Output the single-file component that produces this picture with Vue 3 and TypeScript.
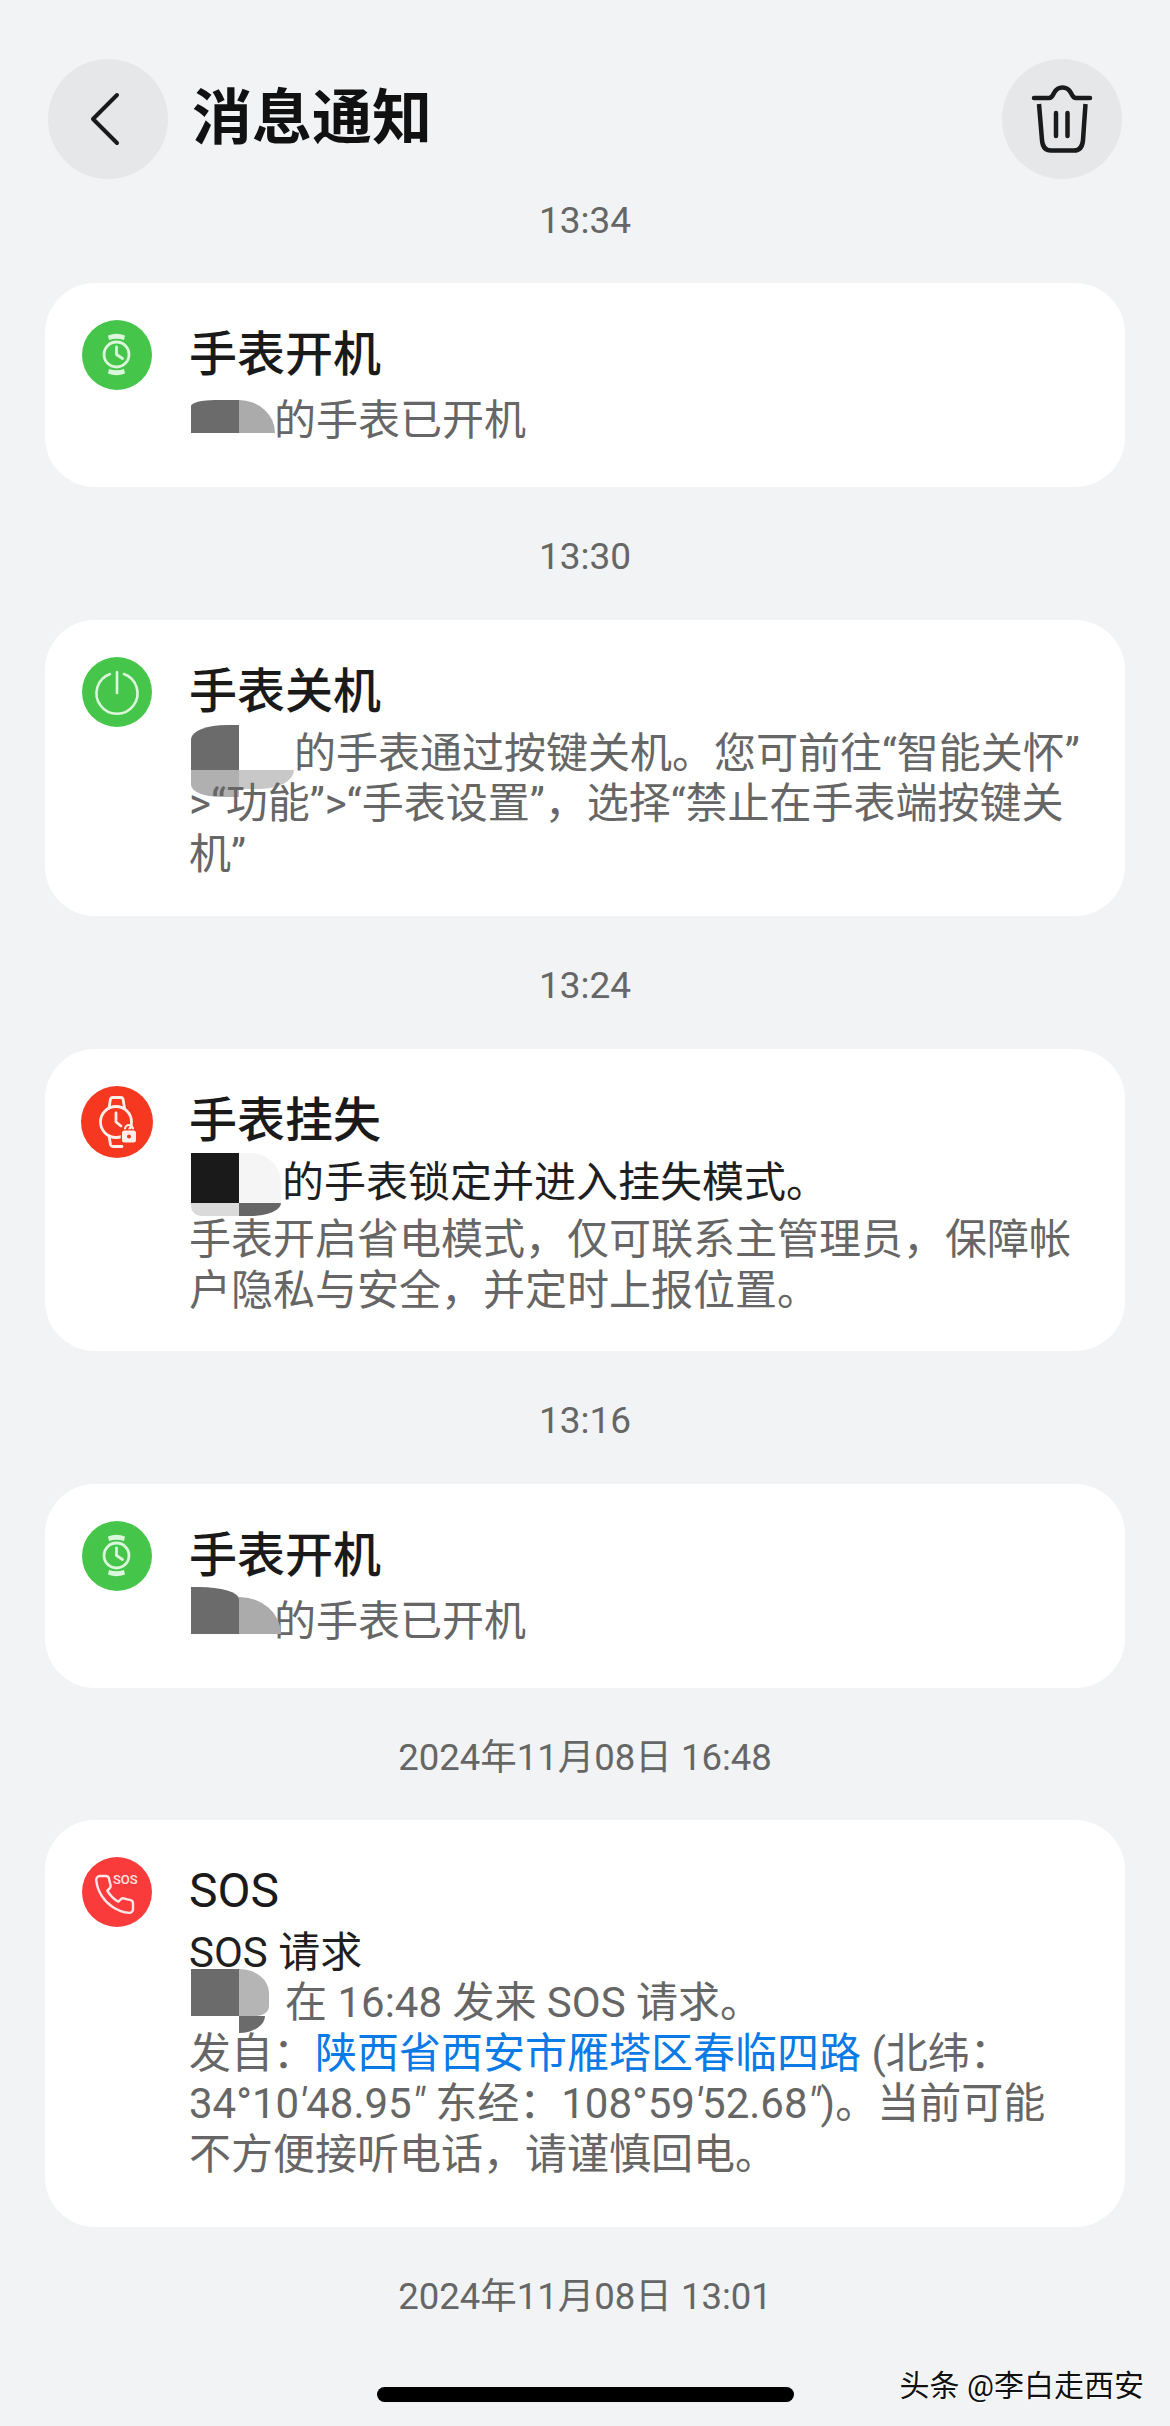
<script setup lang="ts">
</script>

<template>
  <div class="page">
    <header class="bar">
      <button class="round" aria-label="返回">
        <svg width="120" height="120" viewBox="0 0 120 120"><path d="M69 36 L45 60 L69 84" fill="none" stroke="#1a1a1a" stroke-width="4" stroke-linecap="round" stroke-linejoin="round"/></svg>
      </button>
      <h1>消息通知</h1>
      <button class="round" aria-label="删除">
        <svg width="120" height="120" viewBox="0 0 120 120" fill="none" stroke="#1a1a1a" stroke-width="4.500" stroke-linecap="round" stroke-linejoin="round">
          <path d="M32 39 H47 C50 39 51 36 52 34 C54 30 57 28.500 60.500 28.500 C64 28.500 67 30 69 34 C70 36 71 39 74 39 H88" />
          <path d="M37 45 L40 81 C40.500 88 43 91.500 49 91.500 H72 C78 91.500 80.500 88 81 81 L83.500 45" stroke-linecap="butt"/>
          <path d="M54 54 V77 M65.500 54 V77"/>
        </svg>
      </button>
    </header>

    <div class="time first">13:34</div>
    <section class="card">
      <svg class="ico" viewBox="0 0 70 70">
        <circle cx="35" cy="35" r="35" fill="#45c64a"/>
        <g fill="none" stroke="#dcf6dc" stroke-width="2.800" stroke-linecap="round" stroke-linejoin="round">
          <circle cx="34.500" cy="34.500" r="12.500"/>
          <path d="M34.500 27 V34.500 L40.500 38.500"/>
        </g>
        <path d="M26 15.500 Q34.500 12 43 15.500 L42 20 Q34.500 17.500 27 20 Z" fill="#dcf6dc"/>
        <path d="M26 53.500 Q34.500 57 43 53.500 L42 49 Q34.500 51.500 27 49 Z" fill="#dcf6dc"/>
      </svg>
      <div class="main">
        <h2>手表开机</h2>
        <div class="line gray tall one">
          <span class="mask m1"><i class="c a"></i><i class="c b"></i></span>的手表已开机
        </div>
      </div>
    </section>

    <div class="time">13:30</div>
    <section class="card">
      <svg class="ico" viewBox="0 0 70 70">
        <circle cx="35" cy="35" r="35" fill="#45c64a"/>
        <g fill="none" stroke="#dcf6dc" stroke-width="2.600" stroke-linecap="round">
          <path d="M28 17 A20.500 20.500 0 1 0 42 17"/>
          <path d="M35 15 V36"/>
        </g>
      </svg>
      <div class="main">
        <h2>手表关机</h2>
        <div class="body gray">
          <div class="line two">
            <span class="mask m2"><i class="c a"></i><i class="c b"></i><i class="c d"></i><i class="c e"></i></span>的手表通过按键关机。您可前往“智能关怀”
          </div>
          <div class="line">&gt;“功能”&gt;“手表设置”，选择“禁止在手表端按键关</div>
          <div class="line">机”</div>
        </div>
      </div>
    </section>

    <div class="time">13:24</div>
    <section class="card lost">
      <svg class="ico big" viewBox="0 0 72 72">
        <circle cx="36" cy="36" r="36" fill="#f5381f"/>
        <g fill="none" stroke="#ffeeea" stroke-width="2.800" stroke-linecap="round" stroke-linejoin="round">
          <circle cx="35" cy="36" r="15.500"/>
          <path d="M35 27 V36 L40 40"/>
          <path d="M28 22 L29.500 13 Q30 11.500 32 11.500 H40 Q41.500 11.500 42 13 L43.500 22"/>
          <path d="M28 50 L29.500 58.500 Q30 60.500 32 60.500 H41"/>
        </g>
        <path d="M44 45 V43 A4 4 0 0 1 52 43 V45" fill="none" stroke="#ffeeea" stroke-width="2.200"/>
        <rect x="41" y="44.500" width="14" height="12" rx="2.500" fill="#ffeeea" stroke="#f5381f" stroke-width="2.500" paint-order="stroke"/>
        <circle cx="48" cy="50.500" r="2" fill="#f5381f"/>
      </svg>
      <div class="main">
        <h2>手表挂失</h2>
        <div class="line dark three">
          <span class="mask m3"><i class="c a"></i><i class="c b"></i><i class="c d"></i><i class="c e"></i></span>的手表锁定并进入挂失模式。
        </div>
        <div class="body gray para">
          <div class="line">手表开启省电模式，仅可联系主管理员，保障帐</div>
          <div class="line">户隐私与安全，并定时上报位置。</div>
        </div>
      </div>
    </section>

    <div class="time">13:16</div>
    <section class="card">
      <svg class="ico" viewBox="0 0 70 70">
        <circle cx="35" cy="35" r="35" fill="#45c64a"/>
        <g fill="none" stroke="#dcf6dc" stroke-width="2.800" stroke-linecap="round" stroke-linejoin="round">
          <circle cx="34.500" cy="34.500" r="12.500"/>
          <path d="M34.500 27 V34.500 L40.500 38.500"/>
        </g>
        <path d="M26 15.500 Q34.500 12 43 15.500 L42 20 Q34.500 17.500 27 20 Z" fill="#dcf6dc"/>
        <path d="M26 53.500 Q34.500 57 43 53.500 L42 49 Q34.500 51.500 27 49 Z" fill="#dcf6dc"/>
      </svg>
      <div class="main">
        <h2>手表开机</h2>
        <div class="line gray tall four">
          <span class="mask m4"><i class="c a"></i><i class="c b"></i></span>的手表已开机
        </div>
      </div>
    </section>

    <div class="time long">2024年11月08日 16:48</div>
    <section class="card sos">
      <svg class="ico" viewBox="0 0 70 70">
        <circle cx="35" cy="35" r="35" fill="#fa3b3b"/>
        <path transform="translate(10.300 15.300) scale(1.850)" d="M22 16.920v3a2 2 0 0 1-2.180 2 19.790 19.790 0 0 1-8.630-3.070 19.500 19.500 0 0 1-6-6 19.790 19.790 0 0 1-3.070-8.670A2 2 0 0 1 4.110 2h3a2 2 0 0 1 2 1.720 12.840 12.840 0 0 0 .7 2.810 2 2 0 0 1-.45 2.110L8.090 9.910a16 16 0 0 0 6 6l1.270-1.270a2 2 0 0 1 2.110-.45 12.840 12.840 0 0 0 2.810.7A2 2 0 0 1 22 16.920z" fill="none" stroke="#ffe6e6" stroke-width="1.300" stroke-linejoin="round"/>
        <text x="31" y="27" class="sostxt">SOS</text>
      </svg>
      <div class="main">
        <h2 class="latin">SOS</h2>
        <div class="line dark">SOS 请求</div>
        <div class="body gray">
          <div class="line five">
            <span class="mask m5"><i class="c a"></i><i class="c b"></i><i class="c d"></i></span>在 16:48 发来 SOS 请求。
          </div>
          <div class="line">发自：<span class="link">陕西省西安市雁塔区春临四路</span> (北纬：</div>
          <div class="line">34°10<em>′</em>48.95<em>″</em> 东经：108°59<em>′</em>52.68<em>″</em>)。当前可能</div>
          <div class="line">不方便接听电话，请谨慎回电。</div>
        </div>
      </div>
    </section>

    <div class="time long">2024年11月08日 13:01</div>

    <div class="home"></div>
    <div class="mark">头条 @李白走西安</div>
  </div>
</template>

<style>
html, body { margin: 0; background: #f1f3f5; }
</style>

<style scoped>
.page {
  position: relative;
  width: 1170px;
  height: 2426px;
  overflow: hidden;
  box-sizing: border-box;
  padding: 59px 45px 0 45px;
  background: #f1f3f5;
  font-family: Roboto, "Noto Sans CJK SC", sans-serif;
}
.bar {
  display: flex;
  align-items: center;
  height: 120px;
  gap: 24px;
  padding: 0 3px;
}
.round {
  flex: none;
  width: 120px;
  height: 120px;
  padding: 0;
  border: 0;
  border-radius: 50%;
  background: #e5e7e9;
}
.round svg { display: block; }
h1 {
  flex: 1;
  margin: 0;
  font-size: 60px;
  line-height: 70px;
  font-weight: 700;
  color: #111;
}
.time {
  height: 36px;
  margin: 52px 0 45px;
  text-align: center;
  font-size: 37px;
  line-height: 36px;
  color: #666;
}
.time.long { font-size: 36.500px; }
.time.first { margin-top: 24px; margin-bottom: 44px; }
.card {
  display: flex;
  gap: 37px;
  padding: 37px 38px 36px 37px;
  background: #fff;
  border-radius: 50px;
}
.card.lost { padding-bottom: 35px; }
.card.sos { margin-top: -1px; padding-bottom: 47px; }
.ico { flex: none; width: 70px; height: 70px; }
.ico.big { width: 72px; height: 72px; margin: 0 -1px 0 -1px; }
.main { flex: 1; min-width: 0; }
h2 {
  margin: 10px 0 12px;
  font-size: 48px;
  line-height: 50px;
  font-weight: 500;
  color: #1a1a1a;
}
h2.latin { margin-top: 9px; font-weight: 400; }
.line {
  position: relative;
  height: 50.500px;
  font-size: 42px;
  line-height: 50.500px;
  white-space: nowrap;
}
em { font-style: italic; }
.tall { margin-top: 16px; margin-bottom: 4px; }
.gray { color: #666; }
.dark { color: #1f1f1f; }
.para { margin-top: 6.500px; }
.link { color: #0a7ae6; }
.one, .four { padding-left: 85px; }
.two { padding-left: 105px; }
.three { padding-left: 93px; }
.five { padding-left: 96px; }
.mask { position: absolute; left: 2px; display: block; }
.c { position: absolute; display: block; }
.m1 { top: 4px; }
.m1 .a { left: 0; top: 0; width: 48px; height: 33px; background: #6b6b6b; border-top-left-radius: 24px 6px; }
.m1 .b { left: 48px; top: 0; width: 36px; height: 33px; background: #ababab; border-top-right-radius: 36px 33px; }
.m2 { top: -4px; }
.m2 .a { left: 0; top: 0; width: 48px; height: 45px; background: #6b6b6b; border-top-left-radius: 36px 14px; }
.m2 .b { left: 48px; top: 0; width: 55px; height: 45px; background: #fff; }
.m2 .d { left: 0; top: 45px; width: 48px; height: 27px; background: #b0b0b0; border-bottom-left-radius: 30px 12px; }
.m2 .e { left: 48px; top: 45px; width: 55px; height: 19px; background: #c8c8c8; border-bottom-right-radius: 34px 19px; }
.m3 { top: -5px; }
.m3 .a { left: 0; top: 0; width: 48px; height: 50px; background: #1a1a1a; }
.m3 .b { left: 48px; top: 0; width: 42px; height: 50px; background: #f5f5f5; border-top-right-radius: 30px; }
.m3 .d { left: 0; top: 50px; width: 48px; height: 13px; background: #dadada; border-bottom-left-radius: 10px; }
.m3 .e { left: 48px; top: 50px; width: 42px; height: 13px; background: #666; border-bottom-right-radius: 30px 13px; }
.m4 { top: -10px; }
.m4 .a { left: 0; top: 0; width: 48px; height: 47px; background: #6b6b6b; border-top-right-radius: 40px 12px; }
.m4 .b { left: 48px; top: 10px; width: 42px; height: 37px; background: #ababab; border-top-right-radius: 42px 37px; }
.m5 { top: -9px; }
.m5 .a { left: 0; top: 0; width: 48px; height: 47px; background: #6b6b6b; }
.m5 .b { left: 48px; top: 0; width: 30px; height: 47px; background: #b5b5b5; border-top-right-radius: 30px 24px; border-bottom-right-radius: 12px 10px; }
.m5 .d { left: 48px; top: 47px; width: 26px; height: 17px; background: #6b6b6b; border-bottom-right-radius: 26px 17px; }
.sostxt { font: 500 13px Roboto, sans-serif; fill: #ffe6e6; }
.home {
  position: absolute;
  left: 377px;
  top: 2387px;
  width: 417px;
  height: 15px;
  border-radius: 8px;
  background: #000;
}
.mark {
  position: absolute;
  right: 26px;
  top: 2368px;
  font-size: 30px;
  line-height: 36px;
  color: #111;
  text-shadow: 1px 1px 0 #fff, -1px 0 0 #fff;
}
</style>
